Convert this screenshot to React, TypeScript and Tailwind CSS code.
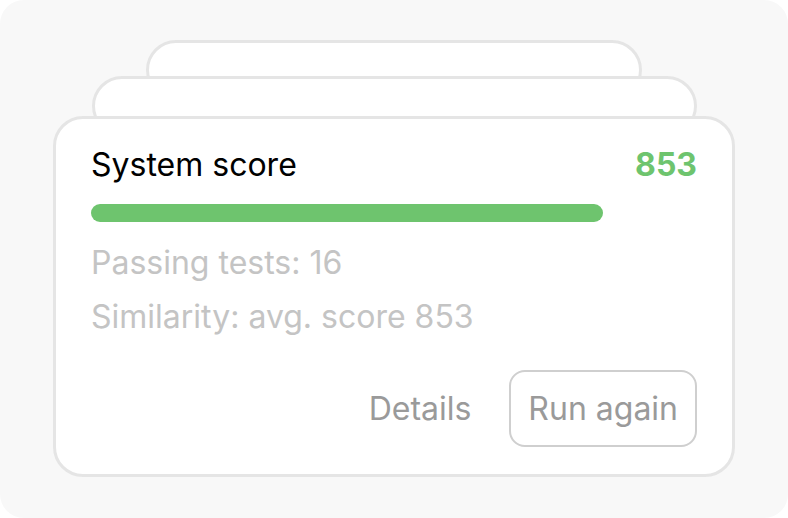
const App = () => {
  return (
    <div className="w-[788px] h-[518px] bg-white">
      <div
        className="w-full h-full rounded-[24px] bg-[#f8f8f8] flex flex-col items-center pt-[40px]"
        style={{ fontFamily: 'Inter, "Noto Sans", sans-serif' }}
      >
        <div className="relative w-[496px] h-[60px] shrink-0 rounded-[30px] border-[3px] border-[#e5e5e5] bg-white" />
        <div className="relative -mt-[24px] w-[605px] h-[60px] shrink-0 rounded-[30px] border-[3px] border-[#e5e5e5] bg-white" />
        <div className="relative -mt-[20px] w-[682px] h-[361px] shrink-0 rounded-[30px] border-[3px] border-[#e5e5e5] bg-white px-[35px] pt-[27px] pb-[27px] flex flex-col">
          <div className="flex items-center justify-between h-[38px]">
            <span className="text-[32px] leading-[38px] text-black">System score</span>
            <span className="text-[32px] leading-[38px] font-bold text-[#6ec46e]">853</span>
          </div>
          <div className="mt-[20px] h-[18px] w-[512px] rounded-full bg-[#6ec46e]" />
          <div className="mt-[22px] flex flex-col gap-[16px] text-[32px] leading-[38px] text-[#c4c4c4]">
            <span>Passing tests: 16</span>
            <span>Similarity: avg. score 853</span>
          </div>
          <div className="mt-auto flex items-center justify-end gap-[38px]">
            <span className="text-[32px] leading-[38px] text-[#9a9a9a]">Details</span>
            <button className="h-[77px] px-[17px] rounded-[16px] border-2 border-[#cfcfcf] text-[32px] leading-[38px] text-[#9a9a9a]">
              Run again
            </button>
          </div>
        </div>
      </div>
    </div>
  );
};

export default App;
